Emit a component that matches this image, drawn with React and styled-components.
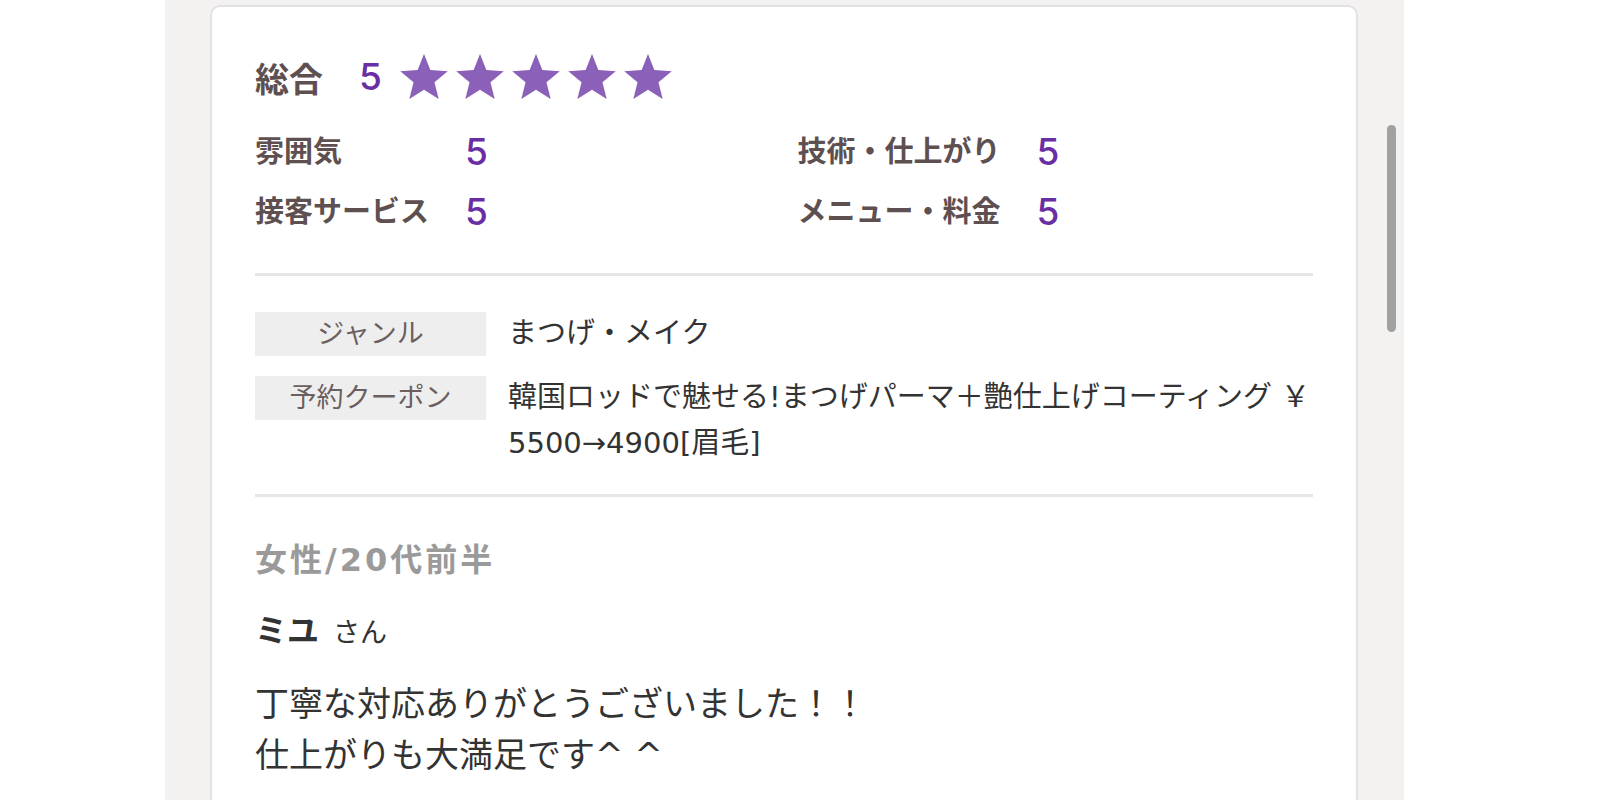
import React from 'react';
import styled, { createGlobalStyle } from 'styled-components';

const GlobalStyle = createGlobalStyle`
  html, body {
    margin: 0;
    padding: 0;
    background: #ffffff;
  }
  body {
    font-family: "DejaVu Sans", "Noto Sans CJK JP", sans-serif;
    overflow: hidden;
  }
`;

const Page = styled.div`
  display: flex;
  height: 800px;
  padding-left: 165px;
`;

const Panel = styled.div`
  position: relative;
  width: 1239px;
  height: 800px;
  box-sizing: border-box;
  padding: 5px 46px 0 45px;
  background: #f3f2f0;
  overflow: hidden;
`;

const ScrollThumb = styled.div`
  position: absolute;
  top: 125px;
  right: 8px;
  width: 9px;
  height: 207px;
  border-radius: 5px;
  background: #a1a1a1;
`;

const Card = styled.div`
  background: #ffffff;
  border: 2px solid #e2e2e4;
  border-radius: 10px;
  padding: 45px 43px 60px;
`;

const TotalRow = styled.div`
  display: flex;
  align-items: center;
  height: 50px;
`;

const TotalLabel = styled.span`
  font-size: 34px;
  font-weight: 700;
  color: #5e5050;
  margin-right: 36px;
`;

const Score = styled.span`
  font-family: "Inter", "Liberation Sans", sans-serif;
  font-size: 37px;
  font-weight: 500;
  color: #6a2ea4;
  line-height: 40px;
`;

const Stars = styled.div`
  display: flex;
  gap: 6px;
  margin-left: 17px;
`;

const SubGrid = styled.div`
  display: grid;
  grid-template-columns: 1fr 1fr;
  column-gap: 27px;
  margin-top: 30px;
`;

const SubColumn = styled.div`
  display: grid;
  grid-template-columns: auto 1fr;
  column-gap: 36px;
  row-gap: 20px;
  align-items: center;
`;

const SubLabel = styled.span`
  font-size: 29px;
  font-weight: 700;
  color: #5e5050;
  line-height: 40px;
`;

const Divider = styled.hr`
  border: none;
  height: 3px;
  background: #e6e6e6;
  margin: ${p => p.top}px 0 0;
`;

const InfoTable = styled.div`
  display: grid;
  grid-template-columns: 231px 1fr;
  column-gap: 22px;
  row-gap: 18px;
  align-items: start;
  margin-top: 34px;
`;

const InfoLabel = styled.div`
  height: 44px;
  margin-top: 2px;
  background: #eeeeee;
  color: #6b5f5f;
  font-size: 27px;
  line-height: 44px;
  text-align: center;
`;

const InfoValue = styled.div`
  font-size: 29px;
  line-height: 46px;
  color: #333333;
`;

const Reviewer = styled.div`
  margin-top: 43px;
  font-size: 32px;
  font-weight: 700;
  line-height: 40px;
  color: #9a9a9a;
  letter-spacing: 3px;
`;

const NameLine = styled.div`
  margin-top: 31px;
  line-height: 40px;
  color: #333333;
`;

const Name = styled.span`
  font-size: 32px;
  font-weight: 700;
  margin-right: 14px;
`;

const Honorific = styled.span`
  font-size: 27px;
`;

const Comment = styled.p`
  margin: 22px 0 0;
  font-size: 34px;
  line-height: 51px;
  color: #333333;
`;

const Star = () => (
  <svg width="50" height="50" viewBox="0 0 24 24">
    <polygon
      fill="#8a60b8"
      points="12,0.9 15.05,8.6 23.41,9.19 17.02,14.53 19.05,22.61 12,18.15 4.95,22.61 6.98,14.53 0.59,9.19 8.95,8.6"
    />
  </svg>
);

const leftScores = [
  { label: '雰囲気', value: 5 },
  { label: '接客サービス', value: 5 },
];

const rightScores = [
  { label: '技術・仕上がり', value: 5 },
  { label: 'メニュー・料金', value: 5 },
];

const ScoreColumn = ({ items }) => (
  <SubColumn>
    {items.map(item => (
      <React.Fragment key={item.label}>
        <SubLabel>{item.label}</SubLabel>
        <Score>{item.value}</Score>
      </React.Fragment>
    ))}
  </SubColumn>
);

const App = () => {
  return (
    <Page>
      <GlobalStyle />
      <Panel>
        <Card>
          <TotalRow>
            <TotalLabel>総合</TotalLabel>
            <Score>5</Score>
            <Stars>
              {[0, 1, 2, 3, 4].map(i => <Star key={i} />)}
            </Stars>
          </TotalRow>
          <SubGrid>
            <ScoreColumn items={leftScores} />
            <ScoreColumn items={rightScores} />
          </SubGrid>
          <Divider top={41} />
          <InfoTable>
            <InfoLabel>ジャンル</InfoLabel>
            <InfoValue>まつげ・メイク</InfoValue>
            <InfoLabel>予約クーポン</InfoLabel>
            <InfoValue>
              韓国ロッドで魅せる!まつげパーマ＋艶仕上げコーティング ￥<wbr />5500→4900[眉毛]
            </InfoValue>
          </InfoTable>
          <Divider top={28} />
          <Reviewer>女性/20代前半</Reviewer>
          <NameLine>
            <Name>ミユ</Name>
            <Honorific>さん</Honorific>
          </NameLine>
          <Comment>
            丁寧な対応ありがとうございました！！<br />
            仕上がりも大満足です^ ^
          </Comment>
        </Card>
        <ScrollThumb />
      </Panel>
    </Page>
  );
};

export default App;
